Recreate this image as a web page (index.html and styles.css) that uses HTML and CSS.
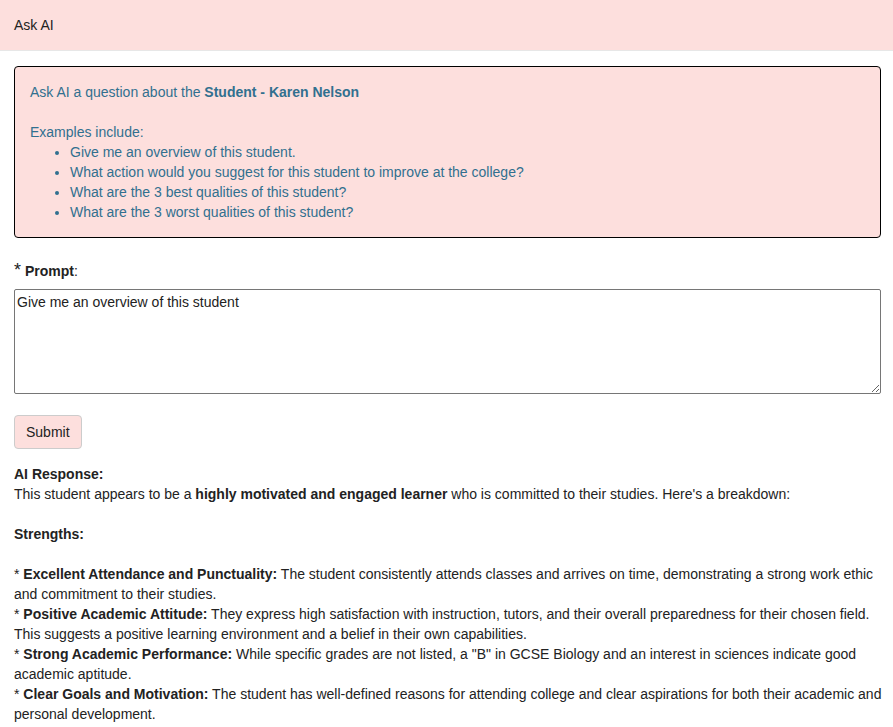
FILE: index.html
```
<!DOCTYPE html>
<html lang="en">

<head>
    <meta charset="UTF-8">
    <meta name="viewport" content="width=device-width, initial-scale=1.0">
    <title>Ask AI</title>
    <link rel="stylesheet" href="styles.css">
</head>

<body>
    <div class="page-header">Ask AI</div>

    <div class="page-content">
        <div class="info-box">
            <p>Ask AI a question about the <strong>Student - Karen Nelson</strong></p>
            <p class="examples-title">Examples include:</p>
            <ul class="examples">
                <li>Give me an overview of this student.</li>
                <li>What action would you suggest for this student to improve at the college?</li>
                <li>What are the 3 best qualities of this student?</li>
                <li>What are the 3 worst qualities of this student?</li>
            </ul>
        </div>

        <label class="prompt-label" for="promptInput"><span class="required">*</span> <strong>Prompt</strong>:</label>
        <textarea id="promptInput" class="prompt-input">Give me an overview of this student</textarea>

        <button class="submit-btn">Submit</button>

        <div class="response">
            <strong>AI Response:</strong><br>
            This student appears to be a <strong>highly motivated and engaged learner</strong> who is committed to their studies. Here's a breakdown:<br>
            <br>
            <strong>Strengths:</strong><br>
            <br>
            * <strong>Excellent Attendance and Punctuality:</strong> The student consistently attends classes and arrives on time, demonstrating a strong work ethic and commitment to their studies.<br>
            * <strong>Positive Academic Attitude:</strong> They express high satisfaction with instruction, tutors, and their overall preparedness for their chosen field. This suggests a positive learning environment and a belief in their own capabilities.<br>
            * <strong>Strong Academic Performance:</strong> While specific grades are not listed, a "B" in GCSE Biology and an interest in sciences indicate good academic aptitude.<br>
            * <strong>Clear Goals and Motivation:</strong> The student has well-defined reasons for attending college and clear aspirations for both their academic and personal development.
        </div>
    </div>
</body>

</html>
```

FILE: styles.css
```
body {
    margin: 0;
    font-family: "Liberation Sans", Arial, sans-serif;
    font-size: 14px;
    line-height: 20px;
    color: #222;
    background-color: #fff;
}

.page-header {
    padding: 15px 14px;
    background-color: #fddfdd;
    border-bottom: 1px solid #e7e7e7;
}

.page-content {
    padding: 15px 12px 0 14px;
}

.info-box {
    padding: 15px;
    background-color: #fddfdd;
    border: 1px solid #000;
    border-radius: 4px;
    color: #31708f;
}

.info-box p {
    margin: 0;
}

.examples-title {
    margin-top: 20px !important;
}

.examples {
    margin: 0;
    padding-left: 40px;
}

.prompt-label {
    display: block;
    height: 20px;
    margin-top: 23px;
    margin-bottom: 8px;
}

.required {
    font-size: 18px;
    line-height: 1;
}

.prompt-input {
    display: block;
    box-sizing: border-box;
    width: 100%;
    height: 105px;
    padding: 2px;
    border: 1px solid #767676;
    border-radius: 2px;
    font-family: "Liberation Sans", Arial, sans-serif;
    font-size: 14px;
    line-height: 20px;
    color: #222;
    resize: vertical;
}

.submit-btn {
    display: block;
    margin-top: 21px;
    padding: 6px 11px;
    background-color: #fddfdd;
    border: 1px solid #ccc;
    border-radius: 4px;
    font-family: "Liberation Sans", Arial, sans-serif;
    font-size: 14px;
    line-height: 20px;
    color: #222;
    cursor: pointer;
}

.response {
    margin-top: 15px;
    margin-right: -8px;
}
```
